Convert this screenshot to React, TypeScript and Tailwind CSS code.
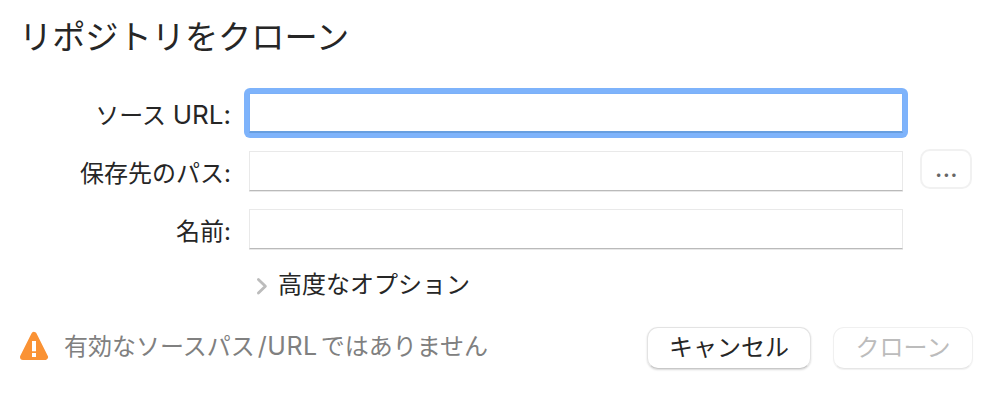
import React from "react";

function Label({ children }: { children: React.ReactNode }) {
  return <label className="w-[231px] shrink-0 pt-[5px] text-right text-[24px] leading-[36px] whitespace-nowrap [font-feature-settings:'calt'_0]">{children}</label>;
}

function TextField() {
  return (
    <div className="ml-[18px] h-[40px] w-[654px] border border-[#e9e9e9] border-b-[#bababa] bg-white shadow-[0_1px_0_#e8e8e8]" />
  );
}

export default function App() {
  return (
    <main className="flex h-[400px] w-[996px] flex-col overflow-hidden bg-white text-[#262626] [font-family:Inter,'Noto_Sans_CJK_JP',sans-serif]">
      <h1 className="mt-[12px] ml-[19px] h-[50px] text-[33.2px] leading-[50px] whitespace-nowrap">リポジトリをクローン</h1>
      <div className="mt-[26px] flex h-[50px] items-center">
        <Label>ソース <span className="text-[26px] leading-none">URL:</span></Label>
        <div className="ml-[13px] h-[50px] w-[664px] rounded-[6px] bg-[#7eb3fb] p-[5px]">
          <div className="h-[40px] border border-[#7bb0f8] border-b-2 border-b-[#679edf] bg-white" />
        </div>
      </div>
      <div className="mt-[13px] flex h-[40px] items-center">
        <Label>保存先のパス:</Label>
        <TextField />
        <button className="mb-[4px] ml-[17px] h-[40px] w-[52px] rounded-[10px] border-2 border-[#f1f1f1] pl-[1px] text-[24px] leading-[36px] font-medium tracking-[0.4px] text-[#666666]">...</button>
      </div>
      <div className="mt-[18px] flex h-[40px] items-center">
        <Label>名前:</Label>
        <TextField />
      </div>
      <div className="mt-[18px] ml-[256px] flex h-[36px] items-center text-[24px] leading-[36px]">
        <svg className="mt-[2px] mr-[10px] h-[18px] w-[12px]" viewBox="0 0 12 18" fill="none" stroke="#bcbcbc" strokeWidth="2.8" strokeLinecap="round" strokeLinejoin="round"><path d="m2.4 2.4 7 6.8-7 6.8" /></svg>
        高度なオプション
      </div>
      <footer className="mt-[23px] flex h-[44px] items-center text-[24px]">
        <svg className="mb-[4px] ml-[19px] h-[30px] w-[30px]" viewBox="0 0 30 30"><path d="M15 4 26 26H4Z" fill="#fa9234" stroke="#fa9234" strokeWidth="6" strokeLinejoin="round" /><path d="M13 10h4v10.3h-4zM13 22h4v4h-4z" fill="white" /></svg>
        <span className="mb-[3px] ml-[15px] w-[583px] whitespace-nowrap text-[#808080]">有効なソースパス<span className="ml-[3px] text-[25px] leading-none tracking-[0.5px]">/URL</span><span className="ml-[3px]">ではありません</span></span>
        <button className="h-[42px] w-[164px] rounded-[11px] border border-[#e3e3e3] border-b-[#c8c8c8] shadow-[0_1px_2px_rgba(0,0,0,0.16)]">キャンセル</button>
        <button className="ml-[22px] h-[42px] w-[140px] rounded-[11px] border border-[#f0f0f0] border-b-[#e6e6e6] text-[#bcbcbc] shadow-[0_1px_1px_rgba(0,0,0,0.06)]">クローン</button>
      </footer>
    </main>
  );
}
